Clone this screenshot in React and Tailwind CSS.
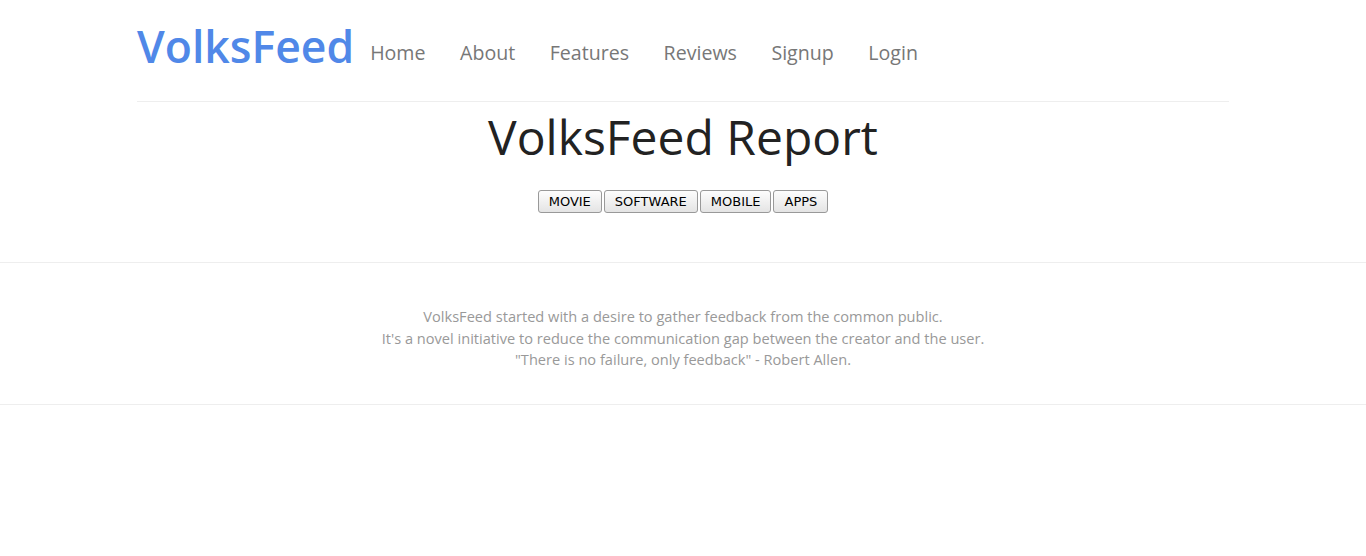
import React from 'react';

const links = ['Home', 'About', 'Features', 'Reviews', 'Signup', 'Login'];
const categories = ['MOVIE', 'SOFTWARE', 'MOBILE', 'APPS'];

export default function App() {
  return (
    <div className="min-h-[556px] bg-white font-['Open_Sans',sans-serif]">
      <div className="w-[1092px] mx-auto">
        <header className="flex items-start h-[102px] pt-[20px] border-b border-[#eee]">
          <a href="#" className="text-[44.5px] leading-[52px] font-semibold text-[#5088e8]">VolksFeed</a>
          <nav className="flex ml-[16px] gap-[34.5px] mt-[17px]">
            {links.map(l => (
              <a key={l} href="#" className="text-[19.6px] leading-[32px] text-[#777]">{l}</a>
            ))}
          </nav>
        </header>
        <div className="flex flex-col items-center pt-[6px] pb-[49px]">
          <h1 className="text-[48px] leading-[58px] text-[#222]">VolksFeed Report</h1>
          <div className="flex gap-[2px] mt-[24px]">
            {categories.map(c => (
              <button
                key={c}
                className="h-[23px] px-[10px] text-[13px] font-['DejaVu_Sans',sans-serif] text-black border border-[#999] rounded-[3px] bg-gradient-to-b from-[#fdfdfd] to-[#e4e4e4]"
              >
                {c}
              </button>
            ))}
          </div>
        </div>
      </div>
      <section className="border-y border-[#eee] pt-[43px] pb-[33px] text-center text-[14.6px] leading-[21.5px] text-[#999]">
        <p>VolksFeed started with a desire to gather feedback from the common public.</p>
        <p>It's a novel initiative to reduce the communication gap between the creator and the user.</p>
        <p>"There is no failure, only feedback" - Robert Allen.</p>
      </section>
    </div>
  );
}
